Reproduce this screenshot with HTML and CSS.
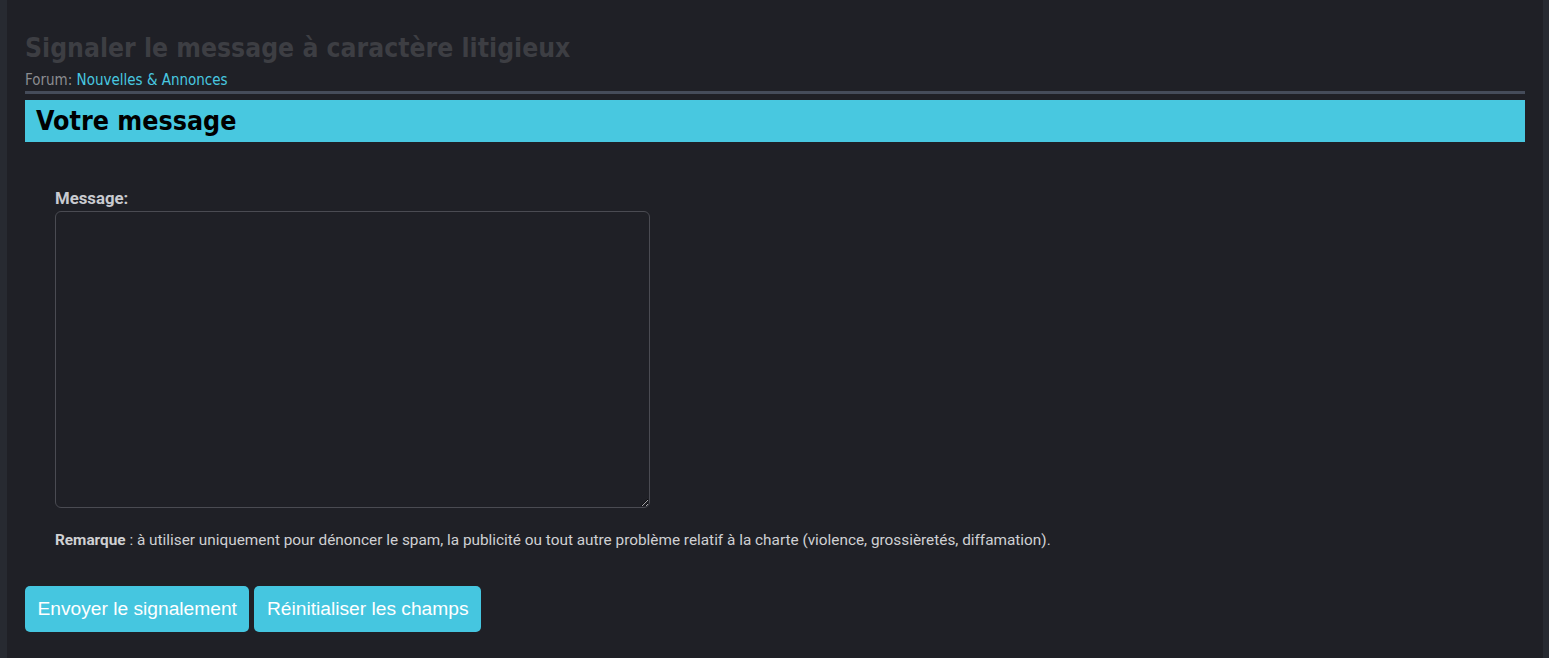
FILE: index.html
```html
<!DOCTYPE html>
<html lang="fr">
<head>
<meta charset="utf-8">
<title>Signaler le message</title>
<link rel="stylesheet" href="styles.css">
</head>
<body>
<div class="frame">
  <main class="page">
    <h1 class="title">Signaler le message à caractère litigieux</h1>
    <div class="crumb">Forum: <a href="#" class="crumb-link">Nouvelles &amp; Annonces</a></div>
    <h2 class="section-head">Votre message</h2>
    <form class="form">
      <div class="field">
        <label class="label" for="msg">Message:</label>
        <textarea id="msg" class="textarea"></textarea>
      </div>
      <p class="note"><strong>Remarque</strong> : à utiliser uniquement pour dénoncer le spam, la publicité ou tout autre problème relatif à la charte (violence, grossièretés, diffamation).</p>
      <div class="actions">
        <button type="button" class="btn">Envoyer le signalement</button>
        <button type="reset" class="btn">Réinitialiser les champs</button>
      </div>
    </form>
  </main>
</div>
</body>
</html>
```
FILE: styles.css
```css
html, body {
  margin: 0;
  padding: 0;
  height: 100%;
  background: #1f2026;
}
.frame {
  min-height: 658px;
  border-left: 7px solid #272a31;
  border-right: 6px solid #272a31;
  background: #1f2026;
  box-sizing: border-box;
}
.page {
  padding: 32px 18px 0 18px;
}
.title {
  margin: 0;
  font-family: "DejaVu Sans Condensed", "DejaVu Sans", sans-serif;
  font-weight: bold;
  font-size: 26.3px;
  line-height: 32px;
  color: #3d3e43;
}
.crumb {
  margin-top: 7px;
  font-family: "DejaVu Sans Condensed", "DejaVu Sans", sans-serif;
  font-size: 15px;
  line-height: 18px;
  color: #8b8c90;
  padding-bottom: 2px;
  border-bottom: 3px solid #454c5a;
}
.crumb-link {
  color: #48c8e0;
  text-decoration: none;
}
.section-head {
  margin: 6px 0 0 0;
  background: #48c8e0;
  color: #000;
  font-family: "DejaVu Sans Condensed", "DejaVu Sans", sans-serif;
  font-weight: bold;
  font-size: 26.6px;
  line-height: 42px;
  padding: 0 11px;
}
.form {
  padding: 45px 0 0 0;
}
.field {
  padding-left: 30px;
  display: flex;
  flex-direction: column;
  align-items: flex-start;
}
.label {
  font-family: Roboto, sans-serif;
  font-weight: bold;
  font-size: 16.8px;
  line-height: 22px;
  color: #c9cbd0;
  margin-bottom: 2px;
}
.textarea {
  width: 595px;
  height: 297px;
  box-sizing: border-box;
  background: #1f2026;
  border: 1px solid #4a4b52;
  border-radius: 6px;
  color: #ddd;
  margin: 0;
}
.note {
  margin: 21px 0 0 30px;
  font-family: Roboto, sans-serif;
  font-size: 15.35px;
  line-height: 22px;
  color: #cfd0d3;
}
.note strong {
  color: #cfd0d3;
}
.actions {
  display: flex;
  gap: 5px;
  margin-top: 35px;
}
.btn {
  font-family: "Liberation Sans", Arial, sans-serif;
  font-size: 19.2px;
  height: 46px;
  padding: 0 12.5px;
  border: none;
  border-radius: 5px;
  background: #45c6e0;
  color: #fff;
}
```
